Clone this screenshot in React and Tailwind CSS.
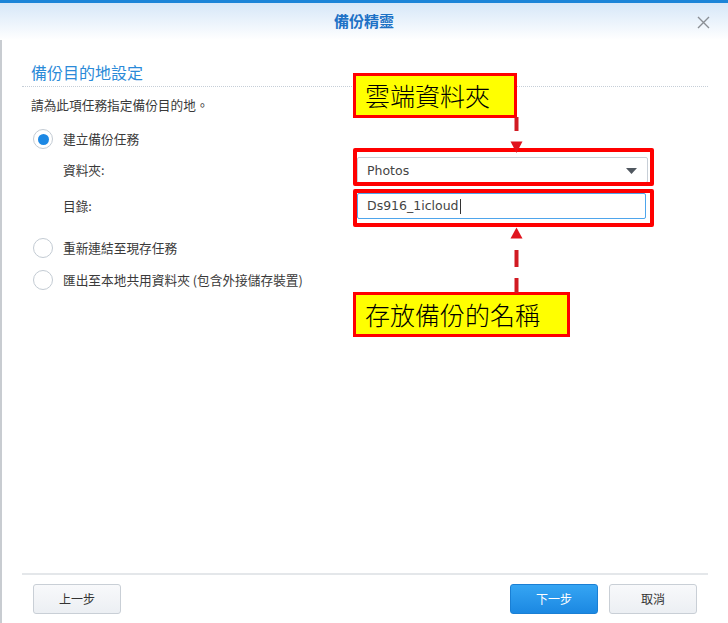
import React from "react";

const ui = { fontFamily: '"Noto Sans CJK TC", "Noto Sans", sans-serif' };
const latin = { fontFamily: '"DejaVu Sans", "Noto Sans CJK TC", sans-serif' };

function Radio({ checked }) {
  return (
    <span className="relative flex h-[20px] w-[20px] shrink-0 items-center justify-center rounded-full border border-[#c3cbd3] bg-white">
      {checked && <span className="h-[11px] w-[11px] rounded-full bg-[#1c88e4]" />}
    </span>
  );
}

function Btn({ children, primary }) {
  return (
    <button
      className={
        primary
          ? "flex h-[30px] w-[88px] items-center justify-center rounded-[3px] border border-[#1a7fd4] bg-gradient-to-b from-[#35a5f3] to-[#1b88e2] text-[12px] text-white"
          : "flex h-[30px] w-[88px] items-center justify-center rounded-[3px] border border-[#c9cfd6] bg-gradient-to-b from-[#f8f9fb] to-[#eceff3] text-[12px] text-[#333]"
      }
    >
      {children}
    </button>
  );
}

export default function App() {
  return (
    <div className="relative flex h-[623px] w-[728px] flex-col overflow-hidden bg-white" style={ui}>
      {/* header */}
      <div className="h-[3px] bg-[#1b84d8]" />
      <div className="relative flex h-[37px] items-center justify-center bg-gradient-to-b from-[#d6e7f8] to-white">
        <span className="text-[15px] font-bold text-[#1e72c6]">備份精靈</span>
        <svg className="absolute right-[18px] top-[13px]" width="13" height="13" viewBox="0 0 13 13">
          <path d="M1 1 L12 12 M12 1 L1 12" stroke="#8a8f95" strokeWidth="1.4" />
        </svg>
      </div>

      {/* body */}
      <div className="flex flex-1 flex-col border-l-2 border-[#c8ccd1]">
        <div className="mx-[20px] border-b border-dotted border-[#c6ced7] pb-[4px] pl-[9px] pt-[22px]">
          <div className="text-[16px] leading-[20px] text-[#2b8ad8]">備份目的地設定</div>
        </div>
        <div className="ml-[29px] mt-[9px] text-[12.7px] leading-[18px] text-[#3a3a3a]">請為此項任務指定備份目的地。</div>

        <div className="ml-[31px] mt-[15px] flex h-[20px] items-center gap-[10px]">
          <Radio checked />
          <span className="text-[12.7px] text-[#3a3a3a]">建立備份任務</span>
        </div>

        <div className="ml-[61px] mt-[8px] flex h-[26px] items-center">
          <span className="w-[294px] text-[12.7px] text-[#3a3a3a]">資料夾:</span>
          <div className="flex h-[26px] w-[291px] items-center justify-between rounded-[2px] border border-[#c8cfd7] bg-white pl-[9px] pr-[10px] pt-[2px] text-[12.5px] text-[#444]" style={latin}>
            <span>Photos</span>
            <svg width="11" height="6" viewBox="0 0 11 6">
              <path d="M0 0 H11 L5.5 6 Z" fill="#50575f" />
            </svg>
          </div>
        </div>

        <div className="ml-[61px] mt-[10px] flex h-[26px] items-center">
          <span className="w-[294px] text-[12.7px] text-[#3a3a3a]">目錄:</span>
          <div className="flex h-[26px] w-[289px] items-center rounded-[2px] border border-[#4ea5ec] bg-white pl-[9px] text-[12.5px] text-[#444]" style={latin}>
            <span>Ds916_1icloud</span>
            <span className="ml-[1px] h-[15px] w-[1px] bg-[#333]" />
          </div>
        </div>

        <div className="ml-[31px] mt-[19px] flex h-[20px] items-center gap-[10px]">
          <Radio />
          <span className="text-[12.7px] text-[#3a3a3a]">重新連結至現存任務</span>
        </div>
        <div className="ml-[31px] mt-[12px] flex h-[20px] items-center gap-[10px]">
          <Radio />
          <span className="text-[12.7px] text-[#3a3a3a]">匯出至本地共用資料夾 (包含外接儲存裝置)</span>
        </div>

        <div className="flex-1" />

        {/* footer */}
        <div className="mx-[20px] flex items-start justify-between border-t-2 border-[#e4e7ea] px-[11px] pb-[9px] pt-[9px]">
          <Btn>上一步</Btn>
          <div className="flex gap-[11px]">
            <Btn primary>下一步</Btn>
            <Btn>取消</Btn>
          </div>
        </div>
      </div>

      {/* annotations */}
      <div className="absolute left-[353px] top-[73px] flex h-[45px] w-[164px] items-center border-[3px] border-[#ff0000] bg-[#ffff00] pl-[9px] text-[25px] font-light leading-none text-black" style={ui}>
        雲端資料夾
      </div>
      <div className="absolute left-[353px] top-[148px] h-[38px] w-[301px] rounded-[2px] border-[4px] border-[#ff0000]" />
      <div className="absolute left-[353px] top-[189px] h-[38px] w-[301px] rounded-[2px] border-[4px] border-[#ff0000]" />
      <div className="absolute left-[353px] top-[292px] flex h-[45px] w-[217px] items-center border-[3px] border-[#ff0000] bg-[#ffff00] pl-[9px] text-[25px] font-light leading-none text-black" style={ui}>
        存放備份的名稱
      </div>
      <svg className="pointer-events-none absolute left-0 top-0" width="728" height="623" viewBox="0 0 728 623">
        <g stroke="#d11a22" strokeWidth="4">
          <line x1="516.5" y1="117" x2="516.5" y2="131" />
          <line x1="516.5" y1="250" x2="516.5" y2="267" />
          <line x1="516.5" y1="278" x2="516.5" y2="293" />
        </g>
        <path d="M510.5 141.5 H522.5 L516.5 153 Z" fill="#e0141e" />
        <path d="M510.5 238.5 H522.5 L516.5 227.5 Z" fill="#e0141e" />
      </svg>
    </div>
  );
}
